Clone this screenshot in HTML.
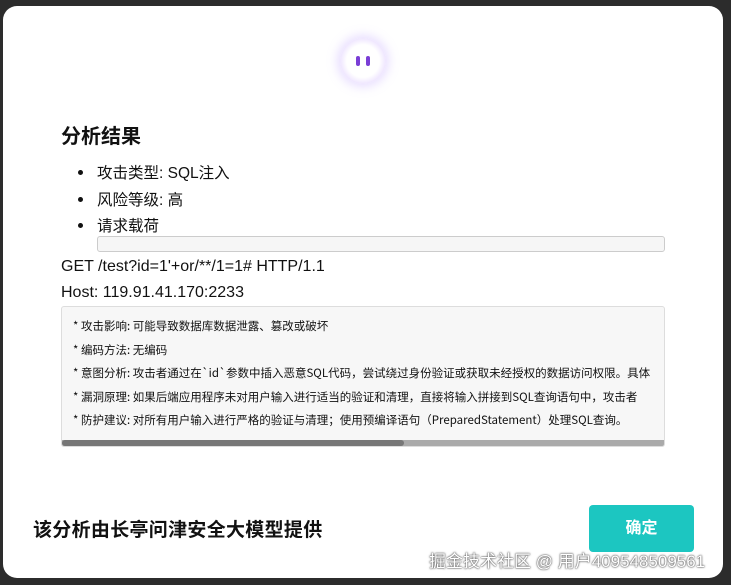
<!DOCTYPE html>
<html><head><meta charset="utf-8"><style>
*{margin:0;padding:0;box-sizing:border-box}
body{width:731px;height:585px;background:#2c2c2c;position:relative;overflow:hidden;font-family:"Liberation Sans","Noto Sans CJK SC",sans-serif;color:#111}
.modal{position:absolute;left:3px;top:6px;width:720px;height:572px;background:#fff;border-radius:14px}
.logo{position:absolute;left:340px;top:38px;width:46px;height:46px;border-radius:50%;background:radial-gradient(circle,#fff 50%,#efe6ff 70%,rgba(255,255,255,0) 100%);box-shadow:0 0 10px 3px rgba(190,160,255,.35)}
.logo i{position:absolute;top:18px;width:4px;height:10px;border-radius:2px;background:#7a3ed6}
h1{position:absolute;left:61px;top:120px;font-size:20px;font-weight:bold}
.li{position:absolute;left:97px;font-size:15.5px}
.li:before{content:"";position:absolute;left:-19px;top:9px;width:5px;height:5px;border-radius:50%;background:#111}
.bar{position:absolute;left:97px;top:236px;width:568px;height:16px;border:1px solid #ccc;border-radius:3px;background:#f6f6f6}
.t{position:absolute;left:61px;font-size:16px}
.pre{position:absolute;left:61px;top:306px;width:604px;height:141px;border:1px solid #ddd;border-radius:3px;background:#f7f7f7;overflow:hidden;font-family:"Noto Sans CJK SC","Liberation Mono",sans-serif;font-size:11.5px;white-space:nowrap}
.pre .ln{position:absolute;left:11px}
.sb{position:absolute;left:0;bottom:0;width:100%;height:6px;background:#aaa}
.sb b{position:absolute;left:0;top:0;width:342px;height:6px;background:#777;border-radius:3px}
.foot{position:absolute;left:33px;top:515px;font-size:19px;font-weight:bold;letter-spacing:0.3px}
.btn{position:absolute;left:589px;top:505px;width:105px;height:47px;background:#1cc6c1;border-radius:4px;color:#fff;font-weight:bold;font-size:16px;text-align:center;line-height:47px}
.wm{position:absolute;left:429px;top:547px;font-size:17px;color:#fff;text-shadow:0 0 2px #444,0 0 1px #333}
</style></head><body>
<div class="modal"></div>
<div class="logo"><i style="left:16px"></i><i style="left:26px"></i></div>
<h1>分析结果</h1>
<div class="li" style="top:161px">攻击类型: SQL注入</div>
<div class="li" style="top:188px">风险等级: 高</div>
<div class="li" style="top:214px">请求载荷</div>
<div class="bar"></div>
<div class="t" style="top:258px">GET /test?id=1'+or/**/1=1# HTTP/1.1</div>
<div class="t" style="top:284px">Host: 119.91.41.170:2233</div>
<div class="pre">
<div class="ln" style="top:11px">* 攻击影响: 可能导致数据库数据泄露、篡改或破坏</div>
<div class="ln" style="top:35px">* 编码方法: 无编码</div>
<div class="ln" style="top:58px">* 意图分析: 攻击者通过在`id`参数中插入恶意SQL代码，尝试绕过身份验证或获取未经授权的数据访问权限。具体</div>
<div class="ln" style="top:82px">* 漏洞原理: 如果后端应用程序未对用户输入进行适当的验证和清理，直接将输入拼接到SQL查询语句中，攻击者</div>
<div class="ln" style="top:105px">* 防护建议: 对所有用户输入进行严格的验证与清理；使用预编译语句（PreparedStatement）处理SQL查询。</div>
<div class="sb"><b></b></div>
</div>
<div class="foot">该分析由长亭问津安全大模型提供</div>
<div class="btn">确定</div>
<div class="wm">掘金技术社区 @ 用户409548509561</div>
</body></html>
